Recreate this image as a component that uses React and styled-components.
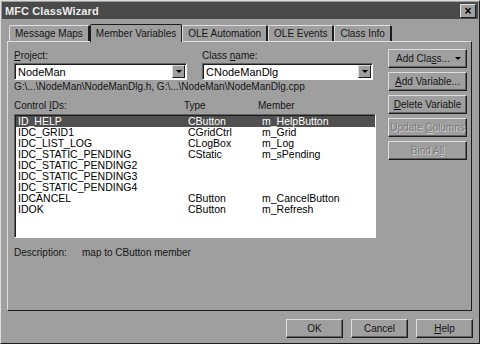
import React from "react";
import styled, { createGlobalStyle, css } from "styled-components";

const GlobalStyle = createGlobalStyle`
    html, body {
        margin: 0;
        padding: 0;
        background: #9f9f9f;
    }
`

const LIGHT = "#dedede";
const SHADOW = "#626262";
const DARK = "#1c1c1c";
const FACE = "#9f9f9f";

const Window = styled.div`
    width: 480px;
    height: 344px;
    box-sizing: border-box;
    background: ${FACE};
    border: 1px solid;
    border-color: ${LIGHT} ${DARK} ${DARK} ${LIGHT};
    padding: 1px;
    display: flex;
    flex-direction: column;
    font-family: "Liberation Sans", Arial, sans-serif;
    font-size: 10px;
    color: #161616;
`

const TitleBar = styled.div`
    height: 17px;
    background: #4a4a4a;
    display: flex;
    align-items: center;
    justify-content: space-between;
    padding: 0 2px 0 3px;
`

const Title = styled.span`
    color: #ececec;
    font-weight: bold;
    font-size: 11px;
    letter-spacing: 0.1px;
`

const CloseButton = styled.div`
    width: 14px;
    height: 12px;
    background: ${FACE};
    border: 1px solid;
    border-color: ${LIGHT} ${DARK} ${DARK} ${LIGHT};
    display: flex;
    align-items: center;
    justify-content: center;
    font-weight: bold;
    font-size: 12px;
    line-height: 1;
    color: #000;
`

const Body = styled.div`
    padding: 5px 6px 0 5px;
    display: flex;
    flex-direction: column;
`

const TabRow = styled.div`
    display: flex;
    margin-left: 2px;
    height: 17px;
    align-items: flex-end;
    position: relative;
    z-index: 1;
`

const Tab = styled.div`
    height: 16px;
    line-height: 16px;
    padding: 0 5px;
    box-sizing: border-box;
    border-top: 1px solid ${LIGHT};
    border-left: 1px solid ${LIGHT};
    border-right: 2px solid ${DARK};
    border-radius: 2px 2px 0 0;
    white-space: nowrap;
    ${p => p.$active && css`
        height: 18px;
        line-height: 17px;
        margin-bottom: -1px;
        background: ${FACE};
        border: 1px solid ${DARK};
        border-bottom: none;
    `}
`

const Panel = styled.div`
    height: 270px;
    box-sizing: border-box;
    border: 1px solid;
    border-color: ${LIGHT} ${DARK} ${DARK} ${LIGHT};
    padding: 7px 2px 0 6px;
    display: flex;
    gap: 12px;
`

const LeftColumn = styled.div`
    width: 362px;
    display: flex;
    flex-direction: column;
`

const FieldRow = styled.div`
    display: flex;
    gap: 15px;
`

const Field = styled.div`
    width: ${p => p.$width}px;
    display: flex;
    flex-direction: column;
`

const Label = styled.div`
    height: 13px;
    line-height: 13px;
    margin-bottom: 1px;
    white-space: nowrap;
`

const Key = styled.span`
    text-decoration: underline;
`

const Combo = styled.div`
    height: 17px;
    box-sizing: border-box;
    background: #fff;
    border: 1px solid;
    border-color: ${SHADOW} #fff #fff ${SHADOW};
    box-shadow: inset 1px 1px 0 ${DARK};
    display: flex;
    align-items: center;
    justify-content: space-between;
    padding: 1px 1px 1px 3px;
    color: #000;
    font-size: 11px;
`

const DropButton = styled.div`
    width: 13px;
    height: 13px;
    box-sizing: border-box;
    background: ${FACE};
    border: 1px solid;
    border-color: ${LIGHT} ${DARK} ${DARK} ${LIGHT};
    display: flex;
    align-items: center;
    justify-content: center;
`

const Arrow = styled.span`
    width: 0;
    height: 0;
    border-left: ${p => p.$size || 3}px solid transparent;
    border-right: ${p => p.$size || 3}px solid transparent;
    border-top: ${p => p.$size || 3}px solid #000;
`

const TextLine = styled.div`
    height: 13px;
    line-height: 13px;
    margin-top: ${p => p.$gap || 0}px;
    white-space: nowrap;
`

const Columns = styled.div`
    display: grid;
    grid-template-columns: 170px 74px 1fr;
    height: ${p => p.$height || 11}px;
    line-height: ${p => p.$height || 11}px;
    padding-left: ${p => p.$indent || 0}px;
    white-space: nowrap;
    ${p => p.$selected && css`
        background: #505050;
        color: #fff;
    `}
`

const ListBox = styled.div`
    margin-top: 2px;
    height: 124px;
    box-sizing: border-box;
    background: #fff;
    border: 1px solid;
    border-color: ${SHADOW} #fff #fff ${SHADOW};
    box-shadow: inset 1px 1px 0 ${DARK};
    padding: 1px 0 0 1px;
    color: #000;
    font-size: 10.5px;
`

const Description = styled.div`
    display: flex;
    margin-top: 8px;
    height: 13px;
    line-height: 13px;
`

const DescLabel = styled.span`
    width: 68px;
`

const ButtonColumn = styled.div`
    width: 79px;
    display: flex;
    flex-direction: column;
    gap: 4px;
`

const Button = styled.div`
    height: 19px;
    width: ${p => p.$width ? `${p.$width}px` : "auto"};
    box-sizing: border-box;
    background: ${FACE};
    border: 1px solid;
    border-color: ${LIGHT} ${DARK} ${DARK} ${LIGHT};
    box-shadow: inset -1px -1px 0 ${SHADOW};
    display: flex;
    align-items: center;
    justify-content: ${p => p.$split ? "space-between" : "center"};
    padding: ${p => p.$split ? "0 5px 0 7px" : "0 2px"};
    white-space: nowrap;
    ${p => p.$disabled && css`
        color: #7c7c7c;
        text-shadow: 1px 1px 0 #d2d2d2;
    `}
`

const Footer = styled.div`
    display: flex;
    justify-content: flex-end;
    gap: 8px;
    margin-top: 8px;
    margin-right: -1px;
`

const rows = [
    ["ID_HELP", "CButton", "m_HelpButton"],
    ["IDC_GRID1", "CGridCtrl", "m_Grid"],
    ["IDC_LIST_LOG", "CLogBox", "m_Log"],
    ["IDC_STATIC_PENDING", "CStatic", "m_sPending"],
    ["IDC_STATIC_PENDING2", "", ""],
    ["IDC_STATIC_PENDING3", "", ""],
    ["IDC_STATIC_PENDING4", "", ""],
    ["IDCANCEL", "CButton", "m_CancelButton"],
    ["IDOK", "CButton", "m_Refresh"],
];

const tabs = ["Message Maps", "Member Variables", "OLE Automation", "OLE Events", "Class Info"];

const App = () => (
    <Window>
        <GlobalStyle/>
        <TitleBar>
            <Title>MFC ClassWizard</Title>
            <CloseButton>×</CloseButton>
        </TitleBar>
        <Body>
            <TabRow>
                {tabs.map(t => <Tab key={t} $active={t === "Member Variables"}>{t}</Tab>)}
            </TabRow>
            <Panel>
                <LeftColumn>
                    <FieldRow>
                        <Field $width={173}>
                            <Label><Key>P</Key>roject:</Label>
                            <Combo>NodeMan<DropButton><Arrow/></DropButton></Combo>
                        </Field>
                        <Field $width={171}>
                            <Label>Class <Key>n</Key>ame:</Label>
                            <Combo>CNodeManDlg<DropButton><Arrow/></DropButton></Combo>
                        </Field>
                    </FieldRow>
                    <TextLine>G:\...\NodeMan\NodeManDlg.h, G:\...\NodeMan\NodeManDlg.cpp</TextLine>
                    <TextLine $gap={6}>
                        <Columns $height={13}>
                            <span>Control <Key>I</Key>Ds:</span>
                            <span>Type</span>
                            <span>Member</span>
                        </Columns>
                    </TextLine>
                    <ListBox>
                        {rows.map((r, i) => (
                            <Columns key={r[0]} $selected={i === 0} $indent={2}>
                                <span>{r[0]}</span>
                                <span>{r[1]}</span>
                                <span>{r[2]}</span>
                            </Columns>
                        ))}
                    </ListBox>
                    <Description>
                        <DescLabel>Description:</DescLabel>
                        <span>map to CButton member</span>
                    </Description>
                </LeftColumn>
                <ButtonColumn>
                    <Button $split><span>Add Cla<Key>s</Key>s...</span><Arrow $size={3}/></Button>
                    <Button><span><Key>A</Key>dd Variable...</span></Button>
                    <Button><span><Key>D</Key>elete Variable</span></Button>
                    <Button $disabled><span>Update <Key>C</Key>olumns</span></Button>
                    <Button $disabled><span>Bind A<Key>l</Key>l</span></Button>
                </ButtonColumn>
            </Panel>
            <Footer>
                <Button $width={57}>OK</Button>
                <Button $width={57}>Cancel</Button>
                <Button $width={57}><span><Key>H</Key>elp</span></Button>
            </Footer>
        </Body>
    </Window>
);

export default App;
